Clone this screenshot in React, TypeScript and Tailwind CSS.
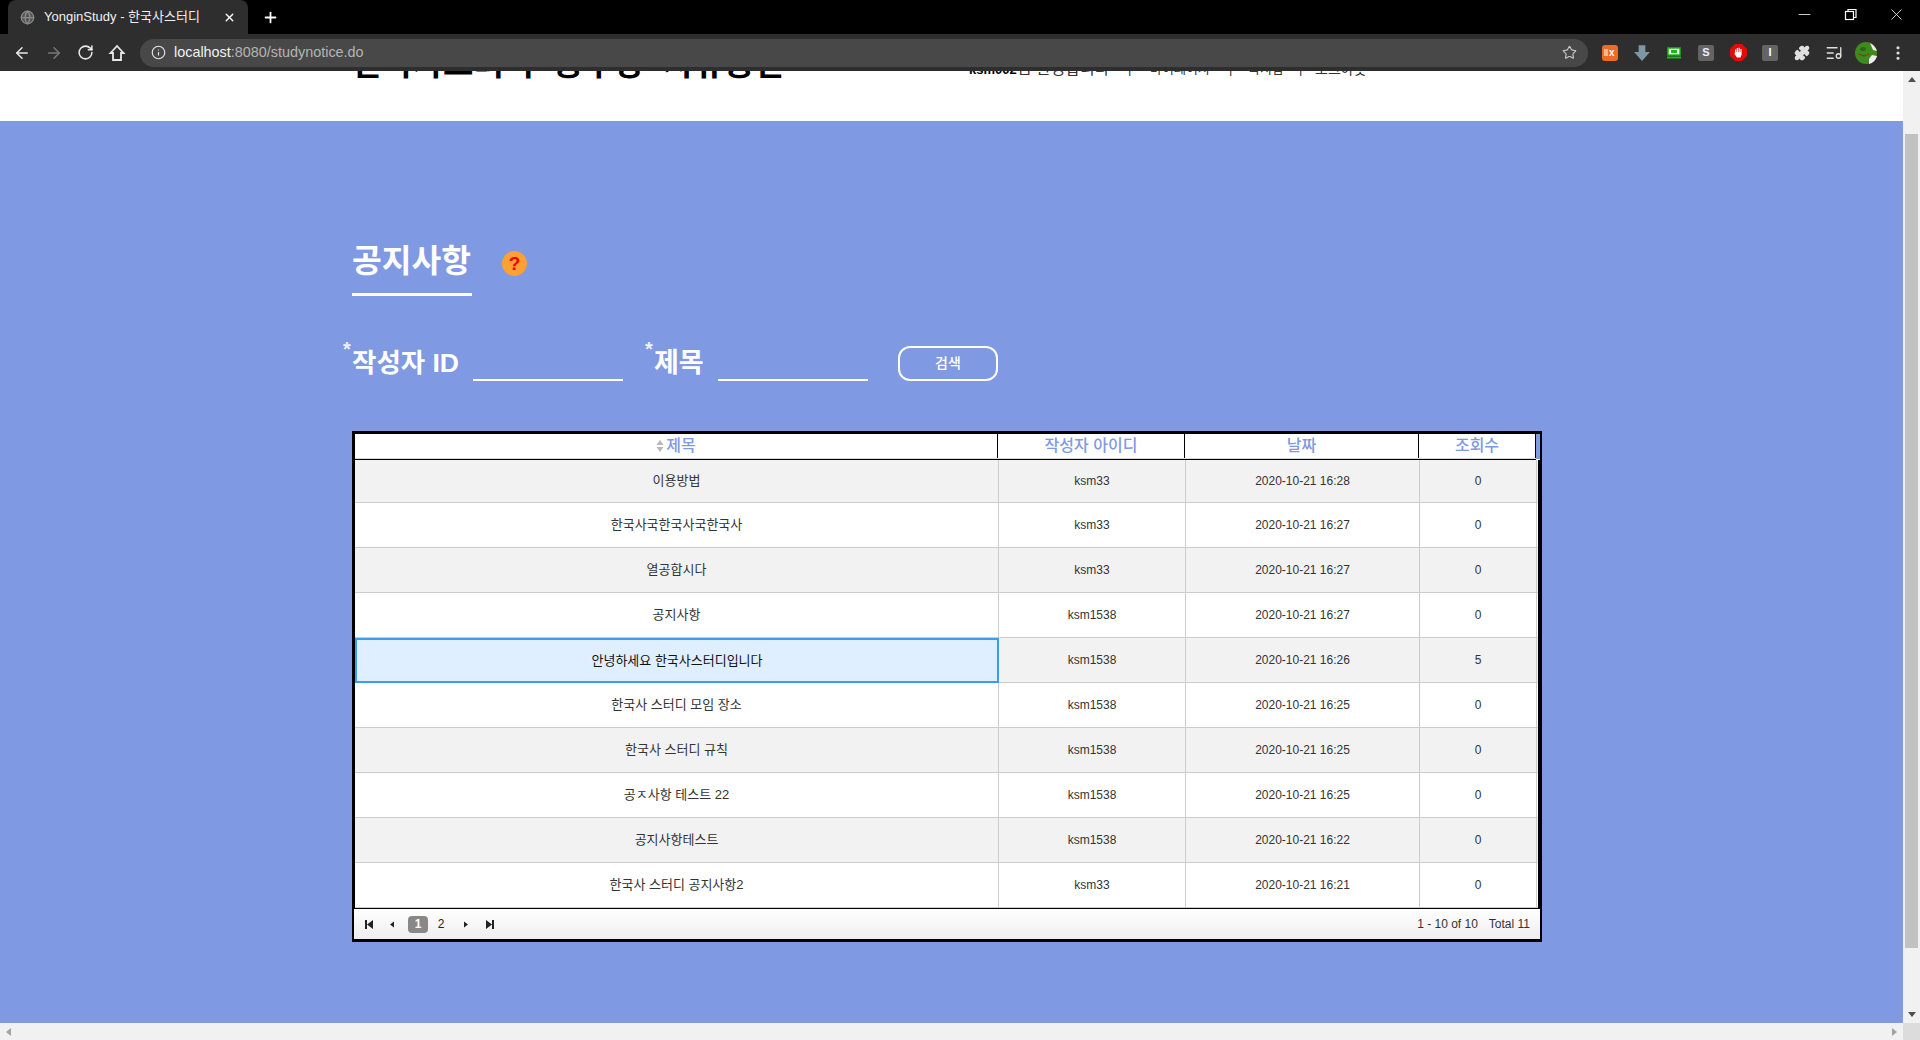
import React from "react";
import { ArrowLeft, ArrowRight, RotateCw, Info, Star, Puzzle, ListMusic, X, Plus, EllipsisVertical, Globe, Minus } from "lucide-react";

const rows = [
  ["이용방법", "ksm33", "2020-10-21 16:28", "0"],
  ["한국사국한국사국한국사", "ksm33", "2020-10-21 16:27", "0"],
  ["열공합시다", "ksm33", "2020-10-21 16:27", "0"],
  ["공지사항", "ksm1538", "2020-10-21 16:27", "0"],
  ["안녕하세요 한국사스터디입니다", "ksm1538", "2020-10-21 16:26", "5"],
  ["한국사 스터디 모임 장소", "ksm1538", "2020-10-21 16:25", "0"],
  ["한국사 스터디 규칙", "ksm1538", "2020-10-21 16:25", "0"],
  ["공ㅈ사항 테스트 22", "ksm1538", "2020-10-21 16:25", "0"],
  ["공지사항테스트", "ksm1538", "2020-10-21 16:22", "0"],
  ["한국사 스터디 공지사항2", "ksm33", "2020-10-21 16:21", "0"],
];

function Tri({ d, c = "#222" }: { d: string; c?: string }) {
  return (
    <svg width="10" height="11" viewBox="0 0 10 11" className="shrink-0">
      <path d={d} fill={c} />
    </svg>
  );
}

function Asterisk() {
  return <span className="w-[9px] self-start text-[20px] leading-[18px] font-bold text-[#eef1fb] mt-[-6px]">*</span>;
}

function Ext({ children }: { children: React.ReactNode }) {
  return <div className="w-[32px] h-[32px] shrink-0 flex items-center justify-center">{children}</div>;
}

export default function App() {
  return (
    <div className="w-[1920px] h-[1040px] overflow-hidden flex flex-col bg-white font-['Liberation_Sans','Noto_Sans_CJK_KR',sans-serif]">
      {/* tab strip */}
      <div className="h-[34px] shrink-0 bg-black flex items-end pl-[8px] text-white">
        <div className="w-[240px] h-[34px] bg-[#2e2e2e] rounded-t-[8px] flex items-center pl-[12px] pr-[10px]">
          <Globe size={15} className="text-[#8a8a8a] mr-[9px]" fill="#555" />
          <span className="text-[13px] text-[#f0f0f0] w-[179px] whitespace-nowrap">YonginStudy - 한국사스터디</span>
          <X size={13} strokeWidth={2.5} className="text-white" />
        </div>
        <div className="h-[34px] w-[44px] flex items-center justify-center">
          <Plus size={17} strokeWidth={2.5} />
        </div>
        <div className="flex-1" />
        <div className="h-[34px] flex items-start pt-[5px] pr-[14px] gap-[27px]">
          <Minus size={19} strokeWidth={1} />
          <svg width="19" height="19" viewBox="0 0 19 19" fill="none" stroke="white" strokeWidth="1.2">
            <rect x="4.5" y="6.5" width="8" height="8" />
            <path d="M7 6.5V4.5H15V12.5H12.5" />
          </svg>
          <X size={19} strokeWidth={1} />
        </div>
      </div>

      {/* toolbar */}
      <div className="h-[37px] shrink-0 bg-[#2e2e2e] flex items-center text-[#e8e8e8]">
        <div className="w-[140px] flex items-center pl-[13px] gap-[14px]">
          <ArrowLeft size={18} strokeWidth={2} />
          <ArrowRight size={18} strokeWidth={2} className="text-[#7a7a7a]" />
          <RotateCw size={17} strokeWidth={2.2} />
          <svg width="18" height="18" viewBox="0 0 18 18" fill="none" stroke="#e8e8e8" strokeWidth="1.8">
            <path d="M9 2L2.5 9H5V16H13V9H15.5Z" />
          </svg>
        </div>
        <div className="w-[1448px] h-[28px] bg-[#484848] rounded-full flex items-center pl-[11px] pr-[11px]">
          <Info size={15} strokeWidth={1.8} className="mr-[8px] text-[#e8e8e8]" />
          <span className="text-[14.4px] text-[#b4b4b4] flex-1">
            <span className="text-[#f2f2f2]">localhost</span>:8080/studynotice.do
          </span>
          <Star size={15} strokeWidth={1.8} className="text-[#c8c8c8]" />
        </div>
        <div className="flex-1 flex items-center pl-[6px]">
          <Ext>
            <div className="w-[16px] h-[16px] rounded-[3px] bg-[#f06a22] flex items-center gap-[1px] pl-[2px] text-[10px] font-bold text-white leading-none">
              <span className="w-[4px] h-[7px] bg-[#f7b48e]" />x
            </div>
          </Ext>
          <Ext>
            <svg width="18" height="18" viewBox="0 0 16 16">
              <path d="M5 1H11V7H15L8 15L1 7H5Z" fill="#7d97a3" />
            </svg>
          </Ext>
          <Ext>
            <svg width="14" height="12" viewBox="0 0 14 12">
              <rect x="1" y="1" width="12" height="7" fill="#fff" stroke="#18b818" strokeWidth="1.5" />
              <rect x="4" y="3" width="6" height="3" fill="#18b818" />
              <rect x="0" y="9.5" width="14" height="2" fill="#18b818" />
            </svg>
          </Ext>
          <Ext>
            <div className="w-[16px] h-[16px] rounded-[2px] bg-[#646464] flex items-center justify-center text-[11px] font-bold text-[#eef] leading-none">S</div>
          </Ext>
          <Ext>
            <svg width="17" height="17" viewBox="0 0 17 17">
              <path d="M5 0H12L17 5V12L12 17H5L0 12V5Z" fill="#e00b0b" />
              <path d="M5 8V5.5H6.3V8H6.8V4H8V8H8.6V3.7H9.8V8H10.4V5H11.6V10.5L10.5 13.5H7L4.5 10Z" fill="#fff" />
            </svg>
          </Ext>
          <Ext>
            <div className="w-[16px] h-[16px] rounded-[2px] bg-[#646464] flex items-center justify-center text-[11px] font-bold text-white leading-none">I</div>
          </Ext>
          <Ext>
            <Puzzle size={16} fill="#e0e0e0" className="text-[#e0e0e0]" />
          </Ext>
          <Ext>
            <ListMusic size={18} strokeWidth={1.8} className="text-[#e0e0e0]" />
          </Ext>
          <Ext>
            <svg width="22" height="22" viewBox="0 0 22 22">
              <circle cx="11" cy="11" r="11" fill="#3f8a1f" />
              <path d="M14 22C18 21 21 18 22 14L17 13L14 17Z" fill="#eee" />
              <path d="M15 1C19 3 21 6 22 9L18 8Z" fill="#eee" />
              <ellipse cx="8" cy="7" rx="3" ry="2" fill="#2c6a12" />
              <path d="M4 12C7 14 11 14 14 12" stroke="#8a3a20" strokeWidth="1.5" fill="none" />
            </svg>
          </Ext>
          <Ext>
            <EllipsisVertical size={18} strokeWidth={2.2} className="text-[#e0e0e0]" />
          </Ext>
        </div>
      </div>

      <div className="flex-1 min-h-0 flex">
        <div className="flex-1 min-w-0 flex flex-col">
          {/* scrolled-off header */}
          <div className="h-[50px] shrink-0 overflow-hidden flex items-end pl-[352px] bg-white text-black">
            <div className="w-[617px] shrink-0 text-[33px] font-bold leading-[48px] mb-[33px] whitespace-nowrap [word-spacing:10px]">한국사스터디 공부방 자유공간</div>
            <div className="text-[13px] leading-[20px] mb-[41px] flex whitespace-nowrap text-[#333]">
              <span className="w-[159px]"><b className="text-black">ksm002</b><span className="text-[16px]">님 환영합니다</span></span>
              <span className="w-[22px]">|</span>
              <span className="w-[79px]">마이페이지</span>
              <span className="w-[19px]">|</span>
              <span className="w-[51px]">쪽지함</span>
              <span className="w-[16px]">|</span>
              <span className="text-[14px]">로그아웃</span>
            </div>
          </div>

          {/* blue page */}
          <div className="flex-1 min-h-0 bg-[#7f99e3] pl-[352px] pt-[119px]">
            <div className="flex items-start h-[56px]">
              <div className="w-[120px] h-[56px] border-b-[3px] border-white text-white text-[32.3px] font-bold leading-[42px] whitespace-nowrap">공지사항</div>
              <div className="ml-[30px] mt-[11px] w-[25px] h-[25px] rounded-full bg-[#ffa033] flex items-center justify-center text-[19px] font-bold text-[#f00000] leading-none">?</div>
            </div>

            <div className="mt-[50px] ml-[-9px] h-[35px] flex items-center text-white">
              <Asterisk />
              <span className="w-[121px] text-[26.5px] font-bold leading-[35px] whitespace-nowrap">작성자 ID</span>
              <span className="w-[150px] h-[35px] border-b-2 border-white" />
              <span className="w-[22px]" />
              <Asterisk />
              <span className="w-[64px] text-[27px] font-bold leading-[35px] whitespace-nowrap">제목</span>
              <span className="w-[150px] h-[35px] border-b-2 border-white" />
              <button className="ml-[30px] w-[100px] h-[35px] border-2 border-white rounded-[12px] text-[14px] text-white font-medium flex items-center justify-center">검색</button>
            </div>

            {/* grid */}
            <div className="mt-[50px] w-[1190px] border-x-2 border-t-[3px] border-b-[3px] border-black bg-white flex flex-col">
              <div className="h-[26px] flex border-l border-black bg-white text-[16px] font-medium text-[#8099e4] shrink-0">
                <div className="flex-1 flex flex-col">
                  <div className="h-[24px] flex">
                    <div className="w-[643px] border-r border-black flex items-center justify-center gap-[2px]">
                      <svg width="8" height="12" viewBox="0 0 8 12"><path d="M4 0L7.5 5H.5ZM4 12L.5 7H7.5Z" fill="#b8b8b8" /></svg>
                      <span>제목</span>
                    </div>
                    <div className="w-[187px] border-r border-black flex items-center justify-center">작성자 아이디</div>
                    <div className="w-[234px] border-r border-black flex items-center justify-center">날짜</div>
                    <div className="w-[117px] border-r border-black flex items-center justify-center">조회수</div>
                  </div>
                  <div className="h-px bg-[#d8d8d8]" />
                  <div className="h-px bg-black" />
                </div>
                <div className="w-[4px] h-[25px] bg-[#7f99e3]" />
              </div>

              <div className="border-l border-r-2 border-black flex flex-col text-[12px] text-[#333]">
                {rows.map((r, i) => (
                  <div
                    key={i}
                    className={`${i === 0 ? "h-[43px]" : "h-[45px]"} flex border-b border-[#cccccc] ${i % 2 === 0 ? "bg-[#f2f2f2]" : "bg-white"}`}
                  >
                    <div
                      className={
                        i === 4
                          ? "w-[644px] h-[45px] shrink-0 border-2 border-[#3d9cf0] bg-[#e0efff] text-[13px] text-[#111] flex items-center justify-center"
                          : "w-[644px] shrink-0 border-r border-[#cccccc] text-[13px] flex items-center justify-center"
                      }
                    >
                      {r[0]}
                    </div>
                    <div className="w-[187px] shrink-0 border-r border-[#cccccc] flex items-center justify-center">{r[1]}</div>
                    <div className="w-[234px] shrink-0 border-r border-[#cccccc] flex items-center justify-center">{r[2]}</div>
                    <div className="w-[117px] shrink-0 border-r border-[#cccccc] flex items-center justify-center">{r[3]}</div>
                  </div>
                ))}
              </div>

              <div className="h-[31px] border-t border-black bg-gradient-to-b from-white to-[#eeeeee] flex items-center text-[12px] text-[#333] shrink-0 pr-[10px]">
                <span className="w-[10px]" />
                <Tri d="M1 1H3V10H1ZM9 1V10L3 5.5Z" />
                <span className="w-[13px]" />
                <Tri d="M7 2.5V8.5L3 5.5Z" />
                <span className="w-[11px]" />
                <span className="w-[20px] h-[17px] rounded-[4px] bg-[#888888] text-white font-bold flex items-center justify-center">1</span>
                <span className="w-[26px] text-center text-[#222]">2</span>
                <span className="w-[7px]" />
                <Tri d="M3 2.5V8.5L7 5.5Z" />
                <span className="w-[14px]" />
                <Tri d="M1 1V10L7 5.5ZM7 1H9V10H7Z" />
                <span className="flex-1" />
                <span>1 - 10 of 10</span>
                <span className="w-[11px]" />
                <span>Total 11</span>
              </div>
            </div>
          </div>
        </div>

        {/* vertical scrollbar */}
        <div className="w-[17px] shrink-0 bg-[#f1f1f1] flex flex-col items-center">
          <svg width="8" height="5" viewBox="0 0 8 5" className="mt-[6px]"><path d="M4 0L8 5H0Z" fill="#505050" /></svg>
          <div className="w-[13px] h-[814px] mt-[52px] bg-[#c1c1c1]" />
          <div className="flex-1" />
          <svg width="8" height="5" viewBox="0 0 8 5" className="mb-[6px]"><path d="M0 0H8L4 5Z" fill="#505050" /></svg>
        </div>
      </div>

      {/* horizontal scrollbar */}
      <div className="h-[17px] shrink-0 bg-[#f1f1f1] flex items-center">
        <svg width="5" height="8" viewBox="0 0 5 8" className="ml-[6px]"><path d="M5 0V8L0 4Z" fill="#a3a3a3" /></svg>
        <div className="flex-1" />
        <svg width="5" height="8" viewBox="0 0 5 8" className="mr-[6px]"><path d="M0 0V8L5 4Z" fill="#a3a3a3" /></svg>
        <div className="w-[17px] h-[17px] bg-[#dcdcdc]" />
      </div>
    </div>
  );
}
